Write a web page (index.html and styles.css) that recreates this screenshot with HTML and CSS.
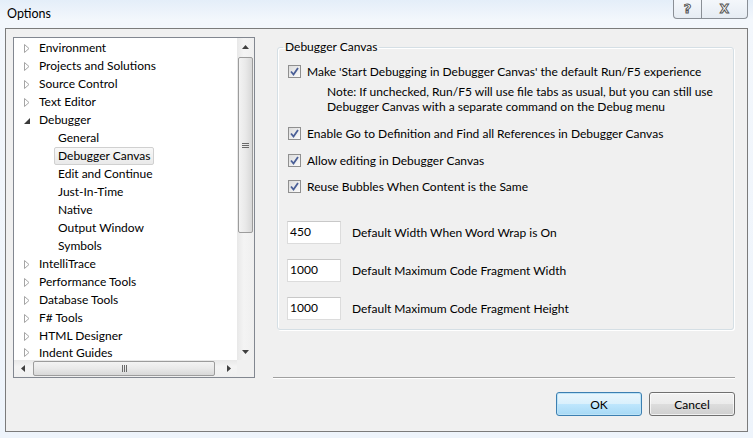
FILE: index.html
```html
<!DOCTYPE html>
<html>
<head>
<meta charset="utf-8">
<link rel="stylesheet" href="styles.css">
</head>
<body>
<div class="window">
  <div class="titlebar">
    <span class="title">Options</span>
    <div class="caption">
      <div class="cbtn help"><span>?</span></div>
      <div class="cbtn close"><span>X</span></div>
    </div>
  </div>
  <div class="client">
    <div class="main">
      <div class="tree">
        <div class="list">
          <div class="row"><span class="exp"><svg width="6" height="9" viewBox="0 0 6 9"><path d="M0.5 0.5 L5 4.5 L0.5 8.5 Z" fill="#fff" stroke="#a5a5a5"/></svg></span>Environment</div>
          <div class="row"><span class="exp"><svg width="6" height="9" viewBox="0 0 6 9"><path d="M0.5 0.5 L5 4.5 L0.5 8.5 Z" fill="#fff" stroke="#a5a5a5"/></svg></span>Projects and Solutions</div>
          <div class="row"><span class="exp"><svg width="6" height="9" viewBox="0 0 6 9"><path d="M0.5 0.5 L5 4.5 L0.5 8.5 Z" fill="#fff" stroke="#a5a5a5"/></svg></span>Source Control</div>
          <div class="row"><span class="exp"><svg width="6" height="9" viewBox="0 0 6 9"><path d="M0.5 0.5 L5 4.5 L0.5 8.5 Z" fill="#fff" stroke="#a5a5a5"/></svg></span>Text Editor</div>
          <div class="row"><span class="exp"><svg width="6" height="9" viewBox="0 0 6 9"><path d="M6 2 L6 8 L0 8 Z" fill="#3a3a3a"/></svg></span>Debugger</div>
          <div class="row child"><span>General</span></div>
          <div class="row child"><span class="sel">Debugger Canvas</span></div>
          <div class="row child"><span>Edit and Continue</span></div>
          <div class="row child"><span>Just-In-Time</span></div>
          <div class="row child"><span>Native</span></div>
          <div class="row child"><span>Output Window</span></div>
          <div class="row child"><span>Symbols</span></div>
          <div class="row"><span class="exp"><svg width="6" height="9" viewBox="0 0 6 9"><path d="M0.5 0.5 L5 4.5 L0.5 8.5 Z" fill="#fff" stroke="#a5a5a5"/></svg></span>IntelliTrace</div>
          <div class="row"><span class="exp"><svg width="6" height="9" viewBox="0 0 6 9"><path d="M0.5 0.5 L5 4.5 L0.5 8.5 Z" fill="#fff" stroke="#a5a5a5"/></svg></span>Performance Tools</div>
          <div class="row"><span class="exp"><svg width="6" height="9" viewBox="0 0 6 9"><path d="M0.5 0.5 L5 4.5 L0.5 8.5 Z" fill="#fff" stroke="#a5a5a5"/></svg></span>Database Tools</div>
          <div class="row"><span class="exp"><svg width="6" height="9" viewBox="0 0 6 9"><path d="M0.5 0.5 L5 4.5 L0.5 8.5 Z" fill="#fff" stroke="#a5a5a5"/></svg></span>F# Tools</div>
          <div class="row"><span class="exp"><svg width="6" height="9" viewBox="0 0 6 9"><path d="M0.5 0.5 L5 4.5 L0.5 8.5 Z" fill="#fff" stroke="#a5a5a5"/></svg></span>HTML Designer</div>
          <div class="row last"><span class="exp"><svg width="6" height="9" viewBox="0 0 6 9"><path d="M0.5 0.5 L5 4.5 L0.5 8.5 Z" fill="#fff" stroke="#a5a5a5"/></svg></span>Indent Guides</div>
        </div>
        <div class="vscroll">
          <div class="arrow"><svg width="7" height="4" viewBox="0 0 7 4"><path d="M3.5 0 L7 4 L0 4 Z" fill="#404040"/></svg></div>
          <div class="vtrack">
            <div class="vthumb"><svg width="7" height="7" viewBox="0 0 7 7"><path d="M0 1.5 H7 M0 3.5 H7 M0 5.5 H7" stroke="#6a6a6a" stroke-width="1"/></svg></div>
          </div>
          <div class="arrow"><svg width="7" height="4" viewBox="0 0 7 4"><path d="M0 0 L7 0 L3.5 4 Z" fill="#404040"/></svg></div>
        </div>
        <div class="hscroll">
          <div class="harrow"><svg width="4" height="7" viewBox="0 0 4 7"><path d="M4 0 L4 7 L0 3.5 Z" fill="#404040"/></svg></div>
          <div class="htrack">
            <div class="hthumb"><svg width="7" height="7" viewBox="0 0 7 7"><path d="M1.5 0 V7 M3.5 0 V7 M5.5 0 V7" stroke="#6a6a6a" stroke-width="1"/></svg></div>
          </div>
          <div class="harrow"><svg width="4" height="7" viewBox="0 0 4 7"><path d="M0 0 L4 3.5 L0 7 Z" fill="#404040"/></svg></div>
        </div>
        <div class="corner"></div>
      </div>
      <div class="right">
        <fieldset class="group">
          <legend>Debugger Canvas</legend>
          <div class="check r1"><span class="cb"><svg width="13" height="13" viewBox="0 0 13 13"><path d="M3 6.5 L5.5 9.5 L10 3" fill="none" stroke="#4a5f97" stroke-width="1.8"/></svg></span>Make 'Start Debugging in Debugger Canvas' the default Run/F5 experience</div>
          <div class="note">Note: If unchecked, Run/F5 will use file tabs as usual, but you can still use<br>Debugger Canvas with a separate command on the Debug menu</div>
          <div class="check r2"><span class="cb"><svg width="13" height="13" viewBox="0 0 13 13"><path d="M3 6.5 L5.5 9.5 L10 3" fill="none" stroke="#4a5f97" stroke-width="1.8"/></svg></span>Enable Go to Definition and Find all References in Debugger Canvas</div>
          <div class="check r3"><span class="cb"><svg width="13" height="13" viewBox="0 0 13 13"><path d="M3 6.5 L5.5 9.5 L10 3" fill="none" stroke="#4a5f97" stroke-width="1.8"/></svg></span>Allow editing in Debugger Canvas</div>
          <div class="check r4"><span class="cb"><svg width="13" height="13" viewBox="0 0 13 13"><path d="M3 6.5 L5.5 9.5 L10 3" fill="none" stroke="#4a5f97" stroke-width="1.8"/></svg></span>Reuse Bubbles When Content is the Same</div>
          <div class="field f1"><span class="input">450</span>Default Width When Word Wrap is On</div>
          <div class="field"><span class="input">1000</span>Default Maximum Code Fragment Width</div>
          <div class="field"><span class="input">1000</span>Default Maximum Code Fragment Height</div>
        </fieldset>
        <div class="sep"></div>
      </div>
    </div>
    <div class="buttons">
      <div class="btn ok">OK</div>
      <div class="btn">Cancel</div>
    </div>
  </div>
</div>
</body>
</html>
```
FILE: styles.css
```css
html, body {
  margin: 0;
  padding: 0;
}
body {
  width: 753px;
  height: 438px;
  overflow: hidden;
  font-family: Lato, "Open Sans", sans-serif;
  font-size: 12px;
  color: #000;
  background: linear-gradient(to bottom, #e4eef9 0px, #f3f7fc 20px, #eef4fb 100%);
}
.window {
  display: flex;
  flex-direction: column;
  height: 438px;
}
.titlebar {
  height: 28px;
  display: flex;
  justify-content: space-between;
  align-items: flex-start;
}
.title {
  margin: 6px 0 0 7px;
  line-height: 16px;
  font-size: 12.5px;
}
.caption {
  display: flex;
  margin-right: 5px;
}
.cbtn {
  height: 18px;
  border: 1px solid #8a8f96;
  border-top: none;
  display: flex;
  align-items: center;
  justify-content: center;
  background: linear-gradient(to bottom, #f4f7fb, #e6ecf3);
}
.cbtn span {
  font-family: "DejaVu Sans", sans-serif;
  font-weight: bold;
  color: #fff;
  -webkit-text-stroke: 1px #555;
  font-size: 13px;
  line-height: 14px;
}
.help {
  width: 27px;
  border-radius: 0 0 0 4px;
}
.close {
  width: 45px;
  border-left: none;
  border-radius: 0 0 4px 0;
}
.close span {
  font-size: 12px;
}
.client {
  margin: 0 5px;
  border: 1px solid #7b7b7b;
  background: #f0f0f0;
  padding: 8px 12px 0 7px;
  box-sizing: border-box;
  height: 404px;
}
.main {
  display: flex;
  height: 341px;
}
.tree {
  width: 242px;
  height: 341px;
  box-sizing: border-box;
  border: 1px solid #828790;
  background: #fff;
  display: grid;
  grid-template-columns: 223px 17px;
  grid-template-rows: 322px 17px;
}
.list {
  overflow: hidden;
  padding: 1px 0 0 10px;
}
.row {
  height: 18px;
  line-height: 18px;
  display: flex;
  align-items: center;
  white-space: nowrap;
}
.row.last {
  height: 15px;
  line-height: 15px;
}
.exp {
  width: 15px;
  display: flex;
  align-items: center;
}
.exp svg {
  display: block;
}
.row.child {
  padding-left: 34px;
}
.row.child span {
  padding: 0 3px;
  margin-left: -4px;
  line-height: 16px;
  border: 1px solid transparent;
}
.row.child span.sel {
  border-color: #d0d0d0;
  border-radius: 2px;
  background: linear-gradient(to bottom, #f8f8f8, #e9e9e9);
}
.vscroll {
  background: linear-gradient(to right, #e8e8e8, #f4f4f4 40%, #efefef);
  display: flex;
  flex-direction: column;
}
.arrow {
  height: 17px;
  display: flex;
  align-items: center;
  justify-content: center;
}
.vtrack {
  flex: 1;
  padding: 2px 1px 0 1px;
}
.vthumb {
  height: 176px;
  border: 1px solid #9c9c9c;
  border-radius: 2px;
  background: linear-gradient(to right, #f3f3f3, #e9e9e9 50%, #d8d8d8);
  display: flex;
  align-items: center;
  justify-content: center;
  box-sizing: border-box;
}
.vthumb svg, .hthumb svg, .arrow svg, .harrow svg {
  display: block;
}
.hscroll {
  background: linear-gradient(to bottom, #e8e8e8, #f4f4f4 40%, #efefef);
  display: flex;
}
.harrow {
  width: 17px;
  display: flex;
  align-items: center;
  justify-content: center;
}
.htrack {
  flex: 1;
  padding: 1px 0;
  display: flex;
}
.hthumb {
  width: 182px;
  margin-left: 2px;
  border: 1px solid #9c9c9c;
  border-radius: 2px;
  background: linear-gradient(to bottom, #f3f3f3, #e9e9e9 50%, #d8d8d8);
  display: flex;
  align-items: center;
  justify-content: center;
  box-sizing: border-box;
}
.corner {
  background: #f0f0f0;
}
.right {
  margin-left: 18px;
  width: 469px;
  display: flex;
  flex-direction: column;
}
.group {
  margin: 2px 1px 0 4px;
  padding: 0 0 9px 10px;
  border: 1px solid #d5dfe5;
  border-radius: 3px;
  box-shadow: inset 1px 1px 0 #fff, 1px 1px 0 #fff;
  min-width: 0;
}
.group legend {
  padding: 0 2px;
  margin-left: -5px;
  line-height: 16px;
}
.check {
  display: flex;
  align-items: center;
  height: 16px;
  white-space: nowrap;
}
.cb {
  width: 13px;
  height: 13px;
  box-sizing: border-box;
  border: 1px solid #8f8f8f;
  background: linear-gradient(135deg, #dcdcdc, #fbfbfb);
  margin-right: 6px;
  display: flex;
  align-items: center;
  justify-content: center;
}
.cb svg {
  display: block;
  margin: -1px;
}
.r1 { margin-top: 8px; }
.note {
  margin: 5px 0 0 39px;
  line-height: 15px;
}
.r2 { margin-top: 11px; }
.r3 { margin-top: 11px; }
.r4 { margin-top: 10px; }
.field {
  display: flex;
  align-items: center;
  margin-top: 15px;
  white-space: nowrap;
}
.field.f1 { margin-top: 27px; }
.input {
  width: 54px;
  height: 23px;
  box-sizing: border-box;
  border: 1px solid #dcdcdc;
  border-top-color: #c8c8c8;
  background: #fff;
  padding-left: 2px;
  line-height: 19px;
  margin-left: -1px;
  margin-right: 11px;
}
.sep {
  margin-top: auto;
  height: 1px;
  border-top: 1px solid #a0a0a0;
  background: #fff;
  margin-bottom: -1px;
}
.buttons {
  display: flex;
  justify-content: flex-end;
  gap: 7px;
  margin-top: 14px;
}
.btn {
  width: 86px;
  height: 24px;
  box-sizing: border-box;
  border: 1px solid #707070;
  border-radius: 3px;
  background: linear-gradient(to bottom, #f2f2f2 0, #ebebeb 50%, #dddddd 51%, #cfcfcf 100%);
  box-shadow: inset 0 0 0 1px rgba(255,255,255,0.7);
  display: flex;
  align-items: center;
  justify-content: center;
}
.btn.ok {
  border-color: #3c7fb1;
  background: linear-gradient(to bottom, #eaf6fd 0, #d9f0fc 50%, #bee6fd 51%, #a7d9f5 100%);
  box-shadow: inset 0 0 0 1px #bde3f7;
}
```
